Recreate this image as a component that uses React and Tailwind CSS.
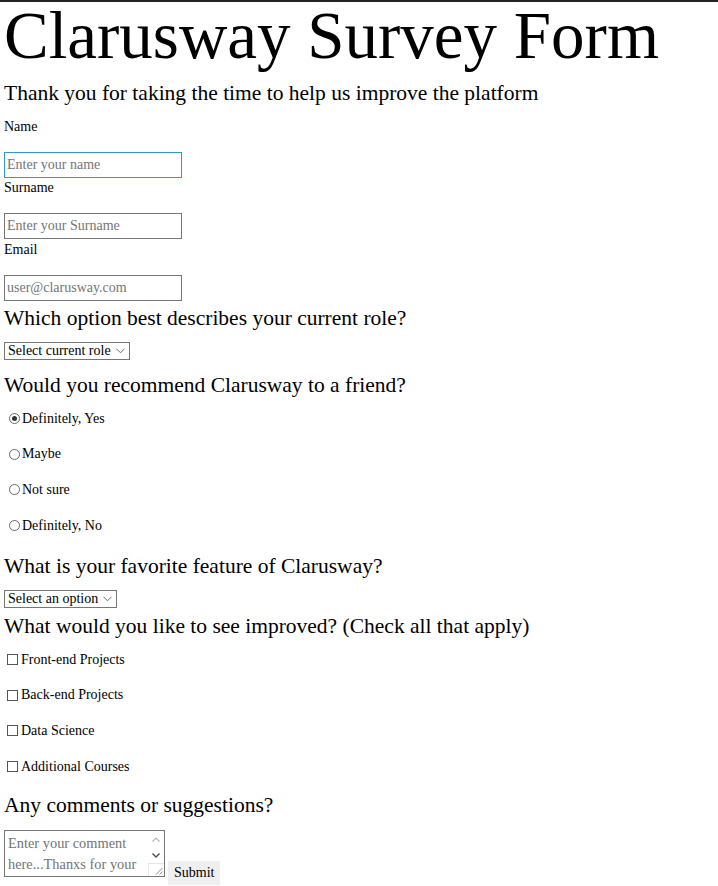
import React from "react";

const Label = ({ children }) => (
  <div className="h-[35.5px] pt-[2.5px] text-[14px] leading-[16px]">{children}</div>
);

const Heading = ({ children, className = "" }) => (
  <div className={`h-[24px] text-[21.5px] leading-[24px] whitespace-nowrap ${className}`}>{children}</div>
);

const Chevron = ({ color = "#555" }) => (
  <svg width="9" height="6" viewBox="0 0 9 6" className="shrink-0">
    <path d="M0.5 0.8 L4.5 4.8 L8.5 0.8" fill="none" stroke={color} strokeWidth="1" />
  </svg>
);

const FakeSelect = ({ text, width }) => (
  <div
    className="flex h-[18px] items-center justify-between border border-[#767676] pl-[3px] pr-[4px] text-[14px] leading-[16px]"
    style={{ width }}
  >
    <span className="whitespace-nowrap">{text}</span>
    <Chevron color="#6b6b6b" />
  </div>
);

const Radio = ({ label, checked }) => (
  <div className="h-[35.67px] pt-[10px]">
    <div className="flex h-[16px] items-center pl-[5px]">
      <span className="flex h-[11px] w-[11px] items-center justify-center rounded-full border border-[#6a6a6a]">
        {checked && <span className="h-[5px] w-[5px] rounded-full bg-[#333]" />}
      </span>
      <span className="ml-[2px] text-[14px] leading-[16px] whitespace-nowrap">{label}</span>
    </div>
  </div>
);

const Check = ({ label }) => (
  <div className="h-[35.67px] pt-[10px]">
    <div className="flex h-[16px] items-center pl-[3px]">
      <span className="h-[11px] w-[11px] border border-[#555]" />
      <span className="ml-[3px] text-[14px] leading-[16px] whitespace-nowrap">{label}</span>
    </div>
  </div>
);

const inputCls =
  "block h-[26px] w-[178px] border border-[#767676] bg-white px-[2px] text-[14px] outline-none placeholder:text-[#757575]";

export default function App() {
  return (
    <div className="min-h-screen border-t-2 border-[#222] bg-white px-[4px] font-['Liberation_Serif',serif] text-black">
      <div className="h-[67px] text-[67px] leading-[67px] whitespace-nowrap">Clarusway Survey Form</div>
      <Heading className="mt-[11.7px]">Thank you for taking the time to help us improve the platform</Heading>

      <div className="mt-[11.8px]">
        <Label>Name</Label>
        <input className={`${inputCls} !border-[#299ad8]`} placeholder="Enter your name" />
        <Label>Surname</Label>
        <input className={inputCls} placeholder="Enter your Surname" />
        <Label>Email</Label>
        <input className={inputCls} placeholder="user@clarusway.com" />
      </div>

      <Heading className="mt-[4.7px]">Which option best describes your current role?</Heading>
      <div className="mt-[12.3px]">
        <FakeSelect text="Select current role" width="126px" />
      </div>

      <Heading className="mt-[12.7px]">Would you recommend Clarusway to a friend?</Heading>
      <div className="mt-[4px]">
        <Radio label="Definitely, Yes" checked />
        <Radio label="Maybe" />
        <Radio label="Not sure" />
        <Radio label="Definitely, No" />
      </div>

      <Heading className="mt-[10.3px]">What is your favorite feature of Clarusway?</Heading>
      <div className="mt-[12.3px]">
        <FakeSelect text="Select an option" width="113px" />
      </div>

      <Heading className="mt-[5.7px]">What would you like to see improved? (Check all that apply)</Heading>
      <div className="mt-[4px]">
        <Check label="Front-end Projects" />
        <Check label="Back-end Projects" />
        <Check label="Data Science" />
        <Check label="Additional Courses" />
      </div>

      <Heading className="mt-[9.3px]">Any comments or suggestions?</Heading>
      <div className="mt-[13px] flex items-start">
        <div className="flex h-[47px] w-[161px] border border-[#767676]">
          <div className="flex-1 pl-[3px] pt-[1.3px] text-[14.4px] leading-[21px] text-[#757575]">
            Enter your comment here...Thanxs for your
          </div>
          <div className="flex w-[16px] flex-col">
            <div className="flex h-[16px] items-center justify-center">
              <svg width="8" height="5" viewBox="0 0 8 5">
                <path d="M0.5 4.5 L4 1 L7.5 4.5" fill="none" stroke="#b5b5b5" strokeWidth="1.2" />
              </svg>
            </div>
            <div className="flex h-[16px] items-center justify-center">
              <svg width="8" height="5" viewBox="0 0 8 5">
                <path d="M0.5 0.5 L4 4 L7.5 0.5" fill="none" stroke="#4a4a4a" strokeWidth="1.4" />
              </svg>
            </div>
            <div className="flex flex-1 items-end justify-end border-l border-t border-[#e6e6e6] pb-[1px] pr-[1px]">
              <svg width="8" height="8" viewBox="0 0 8 8">
                <path d="M7.5 1 L1 7.5 M7.5 4.5 L4.5 7.5" fill="none" stroke="#8a8a8a" strokeWidth="1" />
              </svg>
            </div>
          </div>
        </div>
        <button className="ml-[3px] mt-[31px] h-[24px] bg-[#efefef] px-[6px] text-[14px] leading-[16px]">
          Submit
        </button>
      </div>
    </div>
  );
}
